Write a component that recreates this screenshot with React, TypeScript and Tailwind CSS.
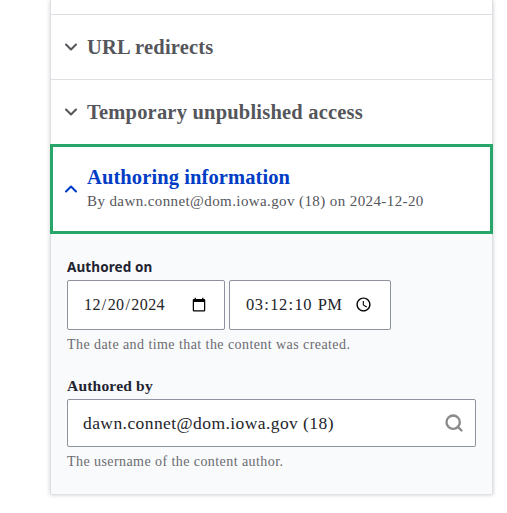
import { ChevronDown, ChevronUp, Search } from "lucide-react";

const serif = "font-['Liberation_Serif',serif]";

function Row({ title, last }: { title: string; last?: boolean }) {
  return (
    <div className={`flex items-center pl-[10px] ${last ? "h-[64px]" : "h-[65px] border-b border-[#dedfe4]"}`}>
      <ChevronDown className="h-[20px] w-[20px] text-[#55565b]" strokeWidth={2.5} />
      <span className={`ml-[6px] text-[20.5px] font-bold tracking-[0.2px] text-[#55565b] ${serif}`}>{title}</span>
    </div>
  );
}

export default function App() {
  return (
    <div className={`h-[513px] w-[507px] bg-white pl-[50px] ${serif}`}>
      <div className="w-[443px] border-x border-[#dedfe4] shadow-[0_1px_4px_rgba(0,0,0,0.2)]">
        <div className="h-[15px] border-b border-[#dedfe4]" />
        <Row title="URL redirects" />
        <Row title="Temporary unpublished access" last />
        <div className="-mx-px flex h-[90px] items-center border-[3px] border-[#26a769] pl-[8px]">
          <ChevronUp className="h-[20px] w-[20px] text-[#003cc5]" strokeWidth={2.5} />
          <div className="ml-[6px] pb-[2px]">
            <div className="text-[20.5px] leading-[24px] font-bold tracking-[0.1px] text-[#003cc5]">Authoring information</div>
            <div className="mt-[2px] text-[15px] leading-[20px] tracking-[0.4px] text-[#55565b]">
              By dawn.connet@dom.iowa.gov (18) on 2024-12-20
            </div>
          </div>
        </div>
        <div className="h-[260px] bg-[#f9fafc] px-[16px] pt-[24px]">
          <div className="font-['Noto_Sans',sans-serif] text-[13.5px] leading-[18px] font-bold tracking-[0.1px] text-[#222330]">Authored on</div>
          <div className="mt-[4px] flex gap-[4px]">
            <input
              type="date"
              defaultValue="2024-12-20"
              className="h-[50px] w-[158px] rounded-[2px] border border-[#8e929c] bg-white pr-[15px] pl-[15px] text-[16px] tracking-[0.4px] text-[#232429]"
            />
            <input
              type="time"
              step={1}
              defaultValue="15:12:10"
              className="h-[50px] w-[162px] rounded-[2px] border border-[#8e929c] bg-white pr-[15px] pl-[15px] text-[16.5px] tracking-[0.4px] text-[#232429]"
            />
          </div>
          <div className="mt-[6px] text-[14px] leading-[18px] tracking-[0.43px] text-[#6b6b70]">
            The date and time that the content was created.
          </div>
          <div className="mt-[23px] text-[15.5px] leading-[18px] font-bold tracking-[0.2px] text-[#222330]">Authored by</div>
          <div className="mt-[4px] flex h-[48px] w-[409px] items-center justify-between rounded-[2px] border border-[#8e929c] bg-white pr-[11px] pl-[15px]">
            <span className="text-[17.5px] tracking-[0.42px] text-[#232429]">dawn.connet@dom.iowa.gov (18)</span>
            <Search className="mb-[1px] h-[20px] w-[20px] text-[#8a8a8a]" strokeWidth={2.8} />
          </div>
          <div className="mt-[6px] text-[14px] leading-[18px] tracking-[0.43px] text-[#6b6b70]">
            The username of the content author.
          </div>
        </div>
      </div>
    </div>
  );
}
